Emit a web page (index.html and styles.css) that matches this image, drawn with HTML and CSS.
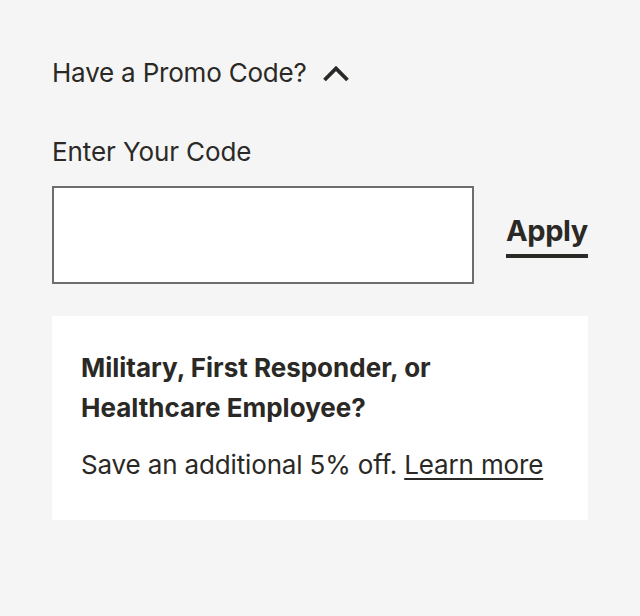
FILE: index.html
```html
<!DOCTYPE html>
<html>
<head>
<meta charset="utf-8">
<link rel="stylesheet" href="styles.css">
</head>
<body>
<div class="promo">
  <button class="toggle">Have a Promo Code?
    <svg class="chev" width="28" height="18" viewBox="0 0 28 18"><path d="M2.5 16 L14 4.5 L25.5 16" fill="none" stroke="#2b2925" stroke-width="3.8"/></svg>
  </button>
  <label class="label" for="code">Enter Your Code</label>
  <div class="row">
    <input id="code" class="input" type="text">
    <button class="apply">Apply</button>
  </div>
  <div class="card">
    <div class="card-title">Military, First Responder, or Healthcare Employee?</div>
    <p class="card-text">Save an additional 5% off. <a href="#" class="link">Learn more</a></p>
  </div>
</div>
</body>
</html>
```
FILE: styles.css
```css
html, body { margin: 0; padding: 0; }
body {
  background: #f5f5f5;
  font-family: Inter, "Noto Sans", sans-serif;
  color: #2b2925;
  width: 640px;
  height: 616px;
}
.promo {
  padding: 56px 52px 0 52px;
  display: flex;
  flex-direction: column;
}
.toggle {
  display: flex;
  align-items: center;
  gap: 15px;
  background: none;
  border: none;
  padding: 0;
  font: inherit;
  font-size: 26px;
  letter-spacing: -0.2px;
  line-height: 34px;
  color: #2b2925;
  align-self: flex-start;
}
.label {
  margin-top: 45px;
  font-size: 26px;
  letter-spacing: -0.1px;
  line-height: 34px;
}
.row {
  margin-top: 17px;
  display: flex;
  align-items: flex-start;
  gap: 32px;
}
.input {
  box-sizing: border-box;
  width: 422px;
  height: 98px;
  border: 2px solid #6b6e6c;
  background: #fff;
  margin: 0;
  flex: none;
}
.apply {
  background: none;
  border: none;
  font: inherit;
  font-size: 29px;
  font-weight: 700;
  letter-spacing: -0.4px;
  color: #2b2925;
  border-bottom: 4px solid #2b2925;
  line-height: 34px;
  padding: 0 0 6px 0;
  margin-top: 28px;
}
.card {
  margin-top: 32px;
  background: #fff;
  padding: 32px 29px 38px 29px;
}
.card-title {
  font-size: 26px;
  font-weight: 700;
  line-height: 40px;
}
.card-text {
  margin: 20px 0 0 0;
  font-size: 26px;
  letter-spacing: -0.15px;
  line-height: 34px;
}
.link {
  color: #2b2925;
  text-decoration: underline;
  text-underline-offset: 4px;
}
```
